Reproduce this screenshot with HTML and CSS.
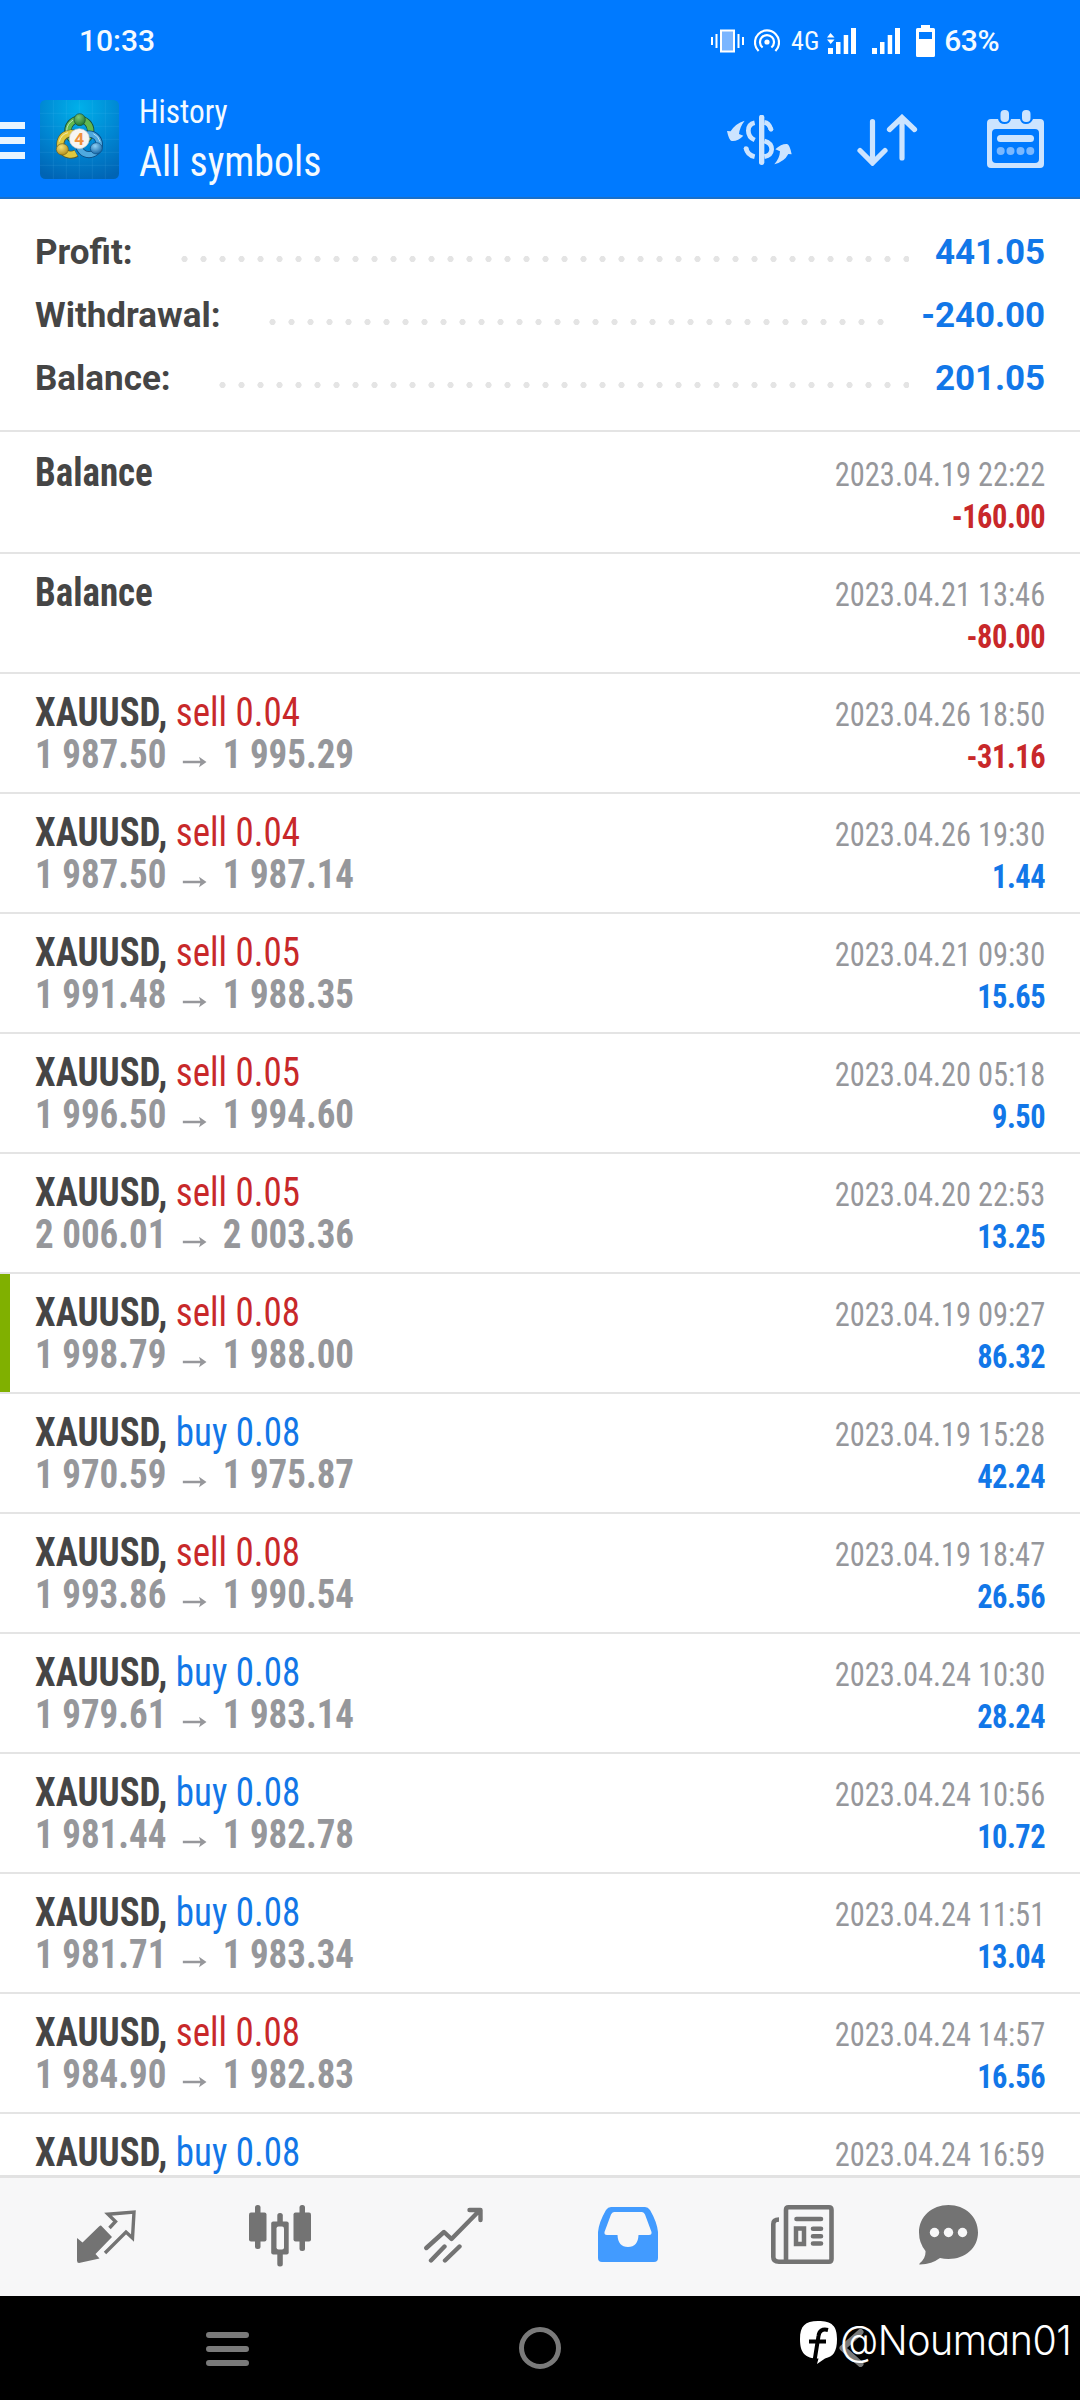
FILE: index.html
```html
<!DOCTYPE html>
<html lang="en">
<head>
<meta charset="utf-8">
<title>History</title>
<link rel="stylesheet" href="styles.css">
</head>
<body>
<svg class="defs" aria-hidden="true">
  <symbol id="arrow" viewBox="0 0 26 12"><path d="M0 6H22" stroke="#96979b" stroke-width="2.4" fill="none"/><path d="M17.5 .8L25.6 6L17.5 11.2L19.3 6Z" fill="#96979b"/></symbol>
</svg>
<div class="phone">
  <div class="status">
    <span class="time">10:33</span>
    <div class="indicators">
      <svg class="vibrate" viewBox="0 0 33 24" width="33" height="24"><rect x="10" y="1.5" width="13" height="21" fill="#7ab5ff" stroke="#fff" stroke-width="2"/><path d="M1 8V16M5.5 5V19M27.5 5V19M32 8V16" stroke="#fff" stroke-width="2"/></svg>
      <svg class="hotspot" viewBox="0 0 26 24" width="26" height="24" fill="none" stroke="#fff" stroke-width="2.2"><circle cx="13" cy="13" r="2.6" fill="#fff" stroke="none"/><path d="M4.6 22A12 12 0 1 1 21.4 22M8.6 18.500A7 7 0 1 1 17.4 18.500"/></svg>
      <span class="network">4G</span>
      <svg class="signal-a" viewBox="0 0 29 26" width="29" height="26" fill="#fff"><path d="M1 20h5v6H1zM9 14h4.5v12H9zM16.7 7h4.5v19h-4.5zM24 0h5v26h-5zM0 9.5L3.5 5L7.5 9.500zM0 11.500H7.500L3.700 16z"/></svg>
      <svg class="signal-b" viewBox="0 0 28 26" width="28" height="26" fill="#fff"><path d="M0 20h5v6H0zM8 14h4.500v12H8zM15.700 7h4.500v19h-4.500zM23 0h5v26h-5z"/></svg>
      <svg class="battery" viewBox="0 0 19 32" width="19" height="32"><path fill="#fff" fill-rule="evenodd" d="M5 0h9v3h3.500q1.500 0 1.500 1.500V30.500q0 1.500-1.500 1.500H1.500Q0 32 0 30.500V4.500Q0 3 1.500 3H5zM3 7v7h13V7z"/></svg>
      <span class="percent">63%</span>
    </div>
  </div>

  <header class="appbar">
    <div class="menu"><i></i><i></i><i></i></div>
    <svg class="logo" viewBox="0 0 237 237" width="79" height="79">
      <defs>
        <radialGradient id="bg" cx=".5" cy=".1" r=".95"><stop offset="0" stop-color="#00b0ea"/><stop offset=".55" stop-color="#0086d2"/><stop offset="1" stop-color="#0064b4"/></radialGradient>
        <radialGradient id="gr" cx=".4" cy=".3" r=".7"><stop offset="0" stop-color="#7fc878"/><stop offset="1" stop-color="#1f7a35"/></radialGradient>
        <radialGradient id="ye" cx=".4" cy=".3" r=".7"><stop offset="0" stop-color="#f5e27a"/><stop offset="1" stop-color="#b3901d"/></radialGradient>
        <radialGradient id="bl" cx=".4" cy=".3" r=".7"><stop offset="0" stop-color="#8fd0f5"/><stop offset="1" stop-color="#1668a8"/></radialGradient>
      </defs>
      <rect width="237" height="237" rx="16" fill="url(#bg)"/>
      <path d="M40 0V237M79 0V237M118 0V237M157 0V237M196 0V237M0 40H237M0 79H237M0 118H237M0 157H237M0 196H237" stroke="#7fd4ff" stroke-opacity=".16" stroke-width="2"/>
      <g fill="none">
        <circle cx="118" cy="92" r="34" stroke="#174f3a" stroke-width="22"/><circle cx="118" cy="92" r="34" stroke="#62b84f" stroke-width="17"/>
        <circle cx="147" cy="133" r="31" stroke="#0c4a80" stroke-width="21"/><circle cx="147" cy="133" r="31" stroke="#4fa9df" stroke-width="16"/>
        <path d="M109 160A32 32 0 1 1 118 112" stroke="#5d5b2a" stroke-width="24"/><path d="M108 160A32 32 0 1 1 118 112" stroke="#e0c83e" stroke-width="19"/>
        <path d="M80 92A38 38 0 0 1 100 60M58 125A36 36 0 0 1 84 98M160 101A35 35 0 0 1 180 125" stroke="#fff" stroke-opacity=".6" stroke-width="3"/>
      </g>
      <ellipse cx="119" cy="59" rx="17" ry="18" fill="url(#gr)" stroke="#174f3a" stroke-width="2"/>
      <ellipse cx="67" cy="148" rx="18" ry="17" fill="url(#ye)" stroke="#6d5d1e" stroke-width="2"/>
      <ellipse cx="169" cy="145" rx="18" ry="17" fill="url(#bl)" stroke="#0c4a80" stroke-width="2"/>
      <circle cx="118" cy="116" r="30" fill="#f7f5f2" stroke="#c9c9c4" stroke-width="2"/>
      <text x="118" y="135" text-anchor="middle" class="logo-digit">4</text>
    </svg>
    <div class="titles">
      <div class="subtitle">History</div>
      <div class="title">All symbols</div>
    </div>
    <svg class="act-currency" viewBox="0 0 195 150" width="65" height="50" fill="none" stroke="#cce4ff" stroke-width="14">
      <path d="M104 7V142" stroke-width="16" stroke-linecap="round"/>
      <path d="M83 23Q64 27 64 47Q64 66 83 75M112 22Q126 24 132 43M57 98Q60 120 83 125M112 78Q134 84 134 103Q133 121 112 125" />
      <circle cx="132" cy="43" r="7" fill="#cce4ff" stroke="none"/><circle cx="57" cy="101" r="7" fill="#cce4ff" stroke="none"/>
      <g fill="#cce4ff" stroke="none"><path d="M53 17Q38 36 36 57L49 62Q32 80 14 78Q6 77 0 48L11 49Q24 26 53 17Z"/><path d="M142 148Q158 130 159 109L145 103Q163 86 180 87Q188 88 194 118L184 117Q172 140 142 148Z"/></g>
    </svg>
    <svg class="act-sort" viewBox="0 0 61 52" width="61" height="52" fill="none" stroke="#cce4ff" stroke-width="5.200" stroke-linecap="round"><path d="M15.500 7.500V47M3 36.500L15.500 49L28 36.500M45 44V4M32.500 15.500L45 3.500L57.500 15.500"/></svg>
    <svg class="act-calendar" viewBox="0 0 57 59" width="57" height="59">
      <path fill="#cce4ff" fill-rule="evenodd" d="M4 9H11Q12 14 17.500 14T24 9H33Q34 14 39 14T46 9H53Q57 9 57 13V54Q57 58 53 58H4Q0 58 0 54V13Q0 9 4 9zM9 19Q5 19 5 23V49Q5 53 9 53H48Q52 53 52 49V23Q52 19 48 19z"/>
      <rect x="13.500" y="0" width="8.500" height="12" rx="4" fill="#cce4ff"/><rect x="35" y="0" width="8.500" height="12" rx="4" fill="#cce4ff"/>
      <rect x="10" y="25" width="37" height="7" rx="3.500" fill="#cce4ff"/>
      <g fill="#7ab8ff"><circle cx="13.700" cy="41" r="4"/><circle cx="23.500" cy="41" r="4"/><circle cx="33.500" cy="41" r="4"/><circle cx="43.300" cy="41" r="4"/></g>
    </svg>
  </header>

  <main class="content">
    <section class="summary">
      <div class="sum"><span class="label">Profit:</span><span class="leader"></span><span class="amount">441.05</span></div>
      <div class="sum"><span class="label">Withdrawal:</span><span class="leader"></span><span class="amount">-240.00</span></div>
      <div class="sum"><span class="label">Balance:</span><span class="leader"></span><span class="amount">201.05</span></div>
    </section>
    <section class="list">
      <div class="row"><div class="deal"><div><b>Balance</b></div></div><div class="result"><div class="date">2023.04.19 22:22</div><div class="neg">-160.00</div></div></div>
      <div class="row"><div class="deal"><div><b>Balance</b></div></div><div class="result"><div class="date">2023.04.21 13:46</div><div class="neg">-80.00</div></div></div>
      <div class="row"><div class="deal"><div><b>XAUUSD,</b> <span class="sell">sell 0.04</span></div><div class="prices">1 987.50<svg><use href="#arrow"/></svg>1 995.29</div></div><div class="result"><div class="date">2023.04.26 18:50</div><div class="neg">-31.16</div></div></div>
      <div class="row"><div class="deal"><div><b>XAUUSD,</b> <span class="sell">sell 0.04</span></div><div class="prices">1 987.50<svg><use href="#arrow"/></svg>1 987.14</div></div><div class="result"><div class="date">2023.04.26 19:30</div><div class="pos">1.44</div></div></div>
      <div class="row"><div class="deal"><div><b>XAUUSD,</b> <span class="sell">sell 0.05</span></div><div class="prices">1 991.48<svg><use href="#arrow"/></svg>1 988.35</div></div><div class="result"><div class="date">2023.04.21 09:30</div><div class="pos">15.65</div></div></div>
      <div class="row"><div class="deal"><div><b>XAUUSD,</b> <span class="sell">sell 0.05</span></div><div class="prices">1 996.50<svg><use href="#arrow"/></svg>1 994.60</div></div><div class="result"><div class="date">2023.04.20 05:18</div><div class="pos">9.50</div></div></div>
      <div class="row"><div class="deal"><div><b>XAUUSD,</b> <span class="sell">sell 0.05</span></div><div class="prices">2 006.01<svg><use href="#arrow"/></svg>2 003.36</div></div><div class="result"><div class="date">2023.04.20 22:53</div><div class="pos">13.25</div></div></div>
      <div class="row marked"><div class="deal"><div><b>XAUUSD,</b> <span class="sell">sell 0.08</span></div><div class="prices">1 998.79<svg><use href="#arrow"/></svg>1 988.00</div></div><div class="result"><div class="date">2023.04.19 09:27</div><div class="pos">86.32</div></div></div>
      <div class="row"><div class="deal"><div><b>XAUUSD,</b> <span class="buy">buy 0.08</span></div><div class="prices">1 970.59<svg><use href="#arrow"/></svg>1 975.87</div></div><div class="result"><div class="date">2023.04.19 15:28</div><div class="pos">42.24</div></div></div>
      <div class="row"><div class="deal"><div><b>XAUUSD,</b> <span class="sell">sell 0.08</span></div><div class="prices">1 993.86<svg><use href="#arrow"/></svg>1 990.54</div></div><div class="result"><div class="date">2023.04.19 18:47</div><div class="pos">26.56</div></div></div>
      <div class="row"><div class="deal"><div><b>XAUUSD,</b> <span class="buy">buy 0.08</span></div><div class="prices">1 979.61<svg><use href="#arrow"/></svg>1 983.14</div></div><div class="result"><div class="date">2023.04.24 10:30</div><div class="pos">28.24</div></div></div>
      <div class="row"><div class="deal"><div><b>XAUUSD,</b> <span class="buy">buy 0.08</span></div><div class="prices">1 981.44<svg><use href="#arrow"/></svg>1 982.78</div></div><div class="result"><div class="date">2023.04.24 10:56</div><div class="pos">10.72</div></div></div>
      <div class="row"><div class="deal"><div><b>XAUUSD,</b> <span class="buy">buy 0.08</span></div><div class="prices">1 981.71<svg><use href="#arrow"/></svg>1 983.34</div></div><div class="result"><div class="date">2023.04.24 11:51</div><div class="pos">13.04</div></div></div>
      <div class="row"><div class="deal"><div><b>XAUUSD,</b> <span class="sell">sell 0.08</span></div><div class="prices">1 984.90<svg><use href="#arrow"/></svg>1 982.83</div></div><div class="result"><div class="date">2023.04.24 14:57</div><div class="pos">16.56</div></div></div>
      <div class="row"><div class="deal"><div><b>XAUUSD,</b> <span class="buy">buy 0.08</span></div></div><div class="result"><div class="date">2023.04.24 16:59</div></div></div>
    </section>
  </main>

  <nav class="tabs">
    <svg class="tab-quotes" viewBox="0 0 59 53" width="59" height="53">
      <path fill="#737373" d="M24 15.500L35 27L18.500 44L22.500 48.500L2 53Q0 53 0 50.500V28L5.500 32.500L22 16.500Q23.500 15 24 15.500Z"/>
      <path fill="none" stroke="#737373" stroke-width="3.400" d="M32.500 18L38.500 11.500L31 4.200L57 2L55.500 28L49 22L28 43"/>
    </svg>
    <svg class="tab-charts" viewBox="0 0 62 62" width="62" height="62" fill="#737373">
      <rect x="0" y="7.500" width="17.500" height="29" rx="2"/><rect x="6" y="0" width="5.500" height="44" rx="2.500"/><rect x="44.500" y="7.500" width="17.500" height="29" rx="2"/><rect x="50.500" y="0" width="5.500" height="46" rx="2.500"/><rect x="28.300" y="8" width="5.500" height="53.500" rx="2.500"/><rect x="22.200" y="16.500" width="17.500" height="33" rx="2"/><rect x="27.500" y="21.500" width="7.500" height="23" rx="2" fill="#f7f7f8"/>
    </svg>
    <svg class="tab-trade" viewBox="0 0 59 56" width="59" height="56" fill="none" stroke="#737373" stroke-width="4.400" stroke-linecap="round"><path d="M2.300 41L20 25L27.500 32L56 3M45.500 3H56.500V13M7 53.500L20.500 39.500M21 53.500L35.500 39.500" stroke-linejoin="round"/></svg>
    <svg class="tab-history" viewBox="0 0 60 55" width="60" height="55"><path fill="#429bff" fill-rule="evenodd" d="M13 0H47Q50 0 52 3Q59 15 60 25V51Q60 55 56 55H4Q0 55 0 51V25Q1 15 8 3Q10 0 13 0ZM16 5Q14 5 13 7.500L6.500 25Q6 28 9 28H19.500Q20 40 30 40T40.500 28H51Q54 28 53.500 25L47 7.500Q46 5 44 5Z"/></svg>
    <svg class="tab-news" viewBox="0 0 63 59" width="63" height="59" fill="none" stroke="#737373" stroke-width="4.600"><path d="M8 14.500Q2.300 14.500 2.300 19V52Q2.300 56.700 8 56.700H58Q60.500 56.700 60.500 54V5Q60.500 2.300 58 2.300H17.500Q15 2.300 15 5V56"/><path d="M25.500 14H50M42 23.800H50M42 31.200H50M42 38.500H50" stroke-linecap="round"/><rect x="25" y="23.500" width="8" height="15.500" stroke-width="4.500"/></svg>
    <svg class="tab-chat" viewBox="0 0 59 60" width="59" height="60"><path fill="#737373" d="M29.500 0C46 0 59 11.500 59 27.500C59 43 46 54 29.500 54Q25 54 21 53Q13 59 1 59.500Q-.500 59.500 1 58Q7 53 6.500 46Q0 38 0 27.500C0 11.500 13 0 29.500 0Z"/><g fill="#f7f7f8"><circle cx="15.500" cy="27.500" r="4.700"/><circle cx="29.500" cy="27.500" r="4.700"/><circle cx="43.500" cy="27.500" r="4.700"/></g></svg>
  </nav>

  <div class="sysbar">
    <svg class="recent" viewBox="0 0 43 34" width="43" height="34" stroke="#7a7a7a" stroke-width="6" stroke-linecap="round"><path d="M3 3H40M3 17H40M3 31H40"/></svg>
    <svg class="home" viewBox="0 0 42 42" width="42" height="42"><circle cx="21" cy="21" r="18.500" fill="none" stroke="#7a7a7a" stroke-width="5"/></svg>
    <svg class="back" viewBox="0 0 25 38" width="25" height="38" fill="none" stroke="#7a7a7a" stroke-width="6" stroke-linecap="round" stroke-linejoin="round"><path d="M21.500 3L3.500 19L21.500 35"/></svg>
    <div class="credit">
      <svg viewBox="0 0 37 43" width="37" height="43"><path fill="#fff" d="M18 0C32 0 37 5 37 18C37 31 33 35.500 25 37.500L17 43L18.500 37.500C5 37.500 0 32 0 18C0 5 5 0 18 0Z"/><path d="M28 9Q19.500 7 18.500 15L14.500 40M9 20.500H26" fill="none" stroke="#000" stroke-width="4"/></svg>
      <span>@Nouman01</span>
    </div>
  </div>
</div>
</body>
</html>
```
FILE: styles.css
```css
* { box-sizing: border-box; }
body { margin: 0; background: #fff; font-family: Roboto, "Liberation Sans", sans-serif; }
svg { display: block; flex: none; }
.defs { position: absolute; width: 0; height: 0; }
.phone { width: 1080px; height: 2400px; display: flex; flex-direction: column; overflow: hidden; }

.status { height: 80px; flex: none; background: #007aff; color: #f4faff; display: flex; justify-content: space-between; align-items: center; padding: 1px 81px 0 79px; font-size: 30px; font-weight: 500; }
.indicators { display: flex; align-items: center; }
.hotspot { margin-left: 10px; }
.network { margin-left: 11px; font-size: 26px; font-weight: 400; font-stretch: 75%; }
.signal-a { margin-left: 8px; }
.signal-b { margin-left: 16px; }
.battery { margin-left: 16px; }
.percent { margin-left: 9px; letter-spacing: -.5px; }

.appbar { height: 119px; flex: none; background: #007aff; border-bottom: 2px solid #1a70c9; color: #f4faff; display: flex; align-items: center; padding: 2px 36px 0 0; font-stretch: 75%; }
.menu { width: 25px; display: flex; flex-direction: column; gap: 7.500px; margin-top: 2px; }
.menu i { height: 7.500px; background: #e8f5ff; }
.logo { margin-left: 15px; }
.logo-digit { font: bold 52px Roboto, sans-serif; fill: #f0913c; }
.titles { margin: 2px 0 0 20px; flex: 1; transform: scaleX(.95); transform-origin: left; }
.subtitle { font-size: 33px; line-height: 43px; }
.title { font-size: 42px; line-height: 58px; font-weight: 440; }
.act-sort { margin-left: 65px; }
.act-calendar { margin-left: 69px; }

.content { flex: 1; min-height: 0; overflow: hidden; }
.summary { height: 233px; padding: 22px 35px 0; border-bottom: 2px solid #e4e4e4; }
.sum { display: flex; align-items: center; height: 63px; font-size: 35px; line-height: 63px; font-weight: 700; color: #454545; }
.leader { flex: 1; height: 6px; margin: 12px 26px 0 42px; background: radial-gradient(circle at 9.500px 3px, #e4e4e4 2.800px, transparent 3.400px) 0 0 / 19px 6px repeat-x; }
.amount { color: #1277e8; letter-spacing: -.1px; }

.list { padding-top: 2px; font-stretch: 75%; }
.row { display: flex; justify-content: space-between; height: 120px; padding: 18px 35px 0; border-bottom: 2px solid #e4e4e4; }
.marked { box-shadow: inset 10px 0 #80b000; }
.deal { font-size: 40px; line-height: 42px; color: #454545; transform: scaleX(.924); transform-origin: left; }
.prices { display: flex; align-items: center; font-weight: 700; color: #96979b; }
.prices svg { width: 28px; height: 12px; margin: 14px 16px 0 17px; }
.result { padding-top: 2px; font-size: 33px; line-height: 42px; text-align: right; transform: scaleX(.922); transform-origin: right; }
.date { color: #96979b; }
.neg, .pos { font-weight: 700; letter-spacing: -.5px; }
.neg, .sell { color: #c8282a; }
.pos, .buy { color: #1277e8; }

.tabs { height: 121px; flex: none; display: flex; padding: 0 102px 0 77px; background: #f7f7f8; border-top: 3px solid #e2e2e2; }
.tab-quotes { margin-top: 32px; }
.tab-charts { margin: 27px 0 0 113px; }
.tab-trade { margin: 29px 0 0 113px; }
.tab-history { margin: 29px 0 0 115px; }
.tab-news { margin: 27px 0 0 113px; }
.tab-chat { margin: 27px 0 0 85px; }

.sysbar { position: relative; height: 104px; flex: none; background: #000; display: flex; padding: 0 0 0 206px; }
.recent { margin-top: 36px; }
.home { margin: 31px 0 0 270px; }
.back { margin: 33px 0 0 278px; }
.credit { position: absolute; left: 800px; top: 26px; display: flex; gap: 3px; color: #fff; }
.credit svg { margin-top: -1px; }
.credit span { margin-top: -3px; font: 350 41px/43px Inter, sans-serif; font-feature-settings: "cv11"; letter-spacing: -.5px; transform: scaleX(.96); transform-origin: left; }
```
